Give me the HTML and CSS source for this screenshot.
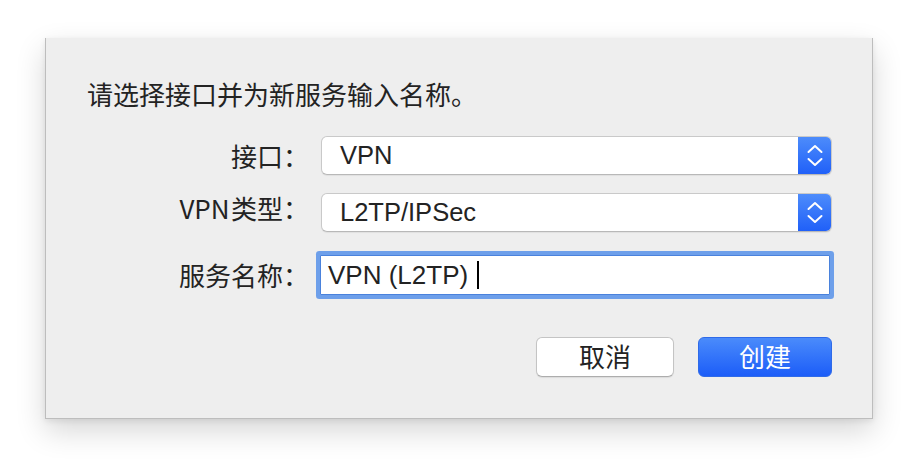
FILE: index.html
```html
<!DOCTYPE html>
<html lang="zh">
<head>
<meta charset="utf-8">
<link rel="stylesheet" href="styles.css">
</head>
<body>
<div class="sheet">
  <p class="title">请选择接口并为新服务输入名称。</p>
  <div class="form">
    <div class="row row-1">
      <span class="label">接口：</span>
      <div class="popup">
        <span class="popup-text">VPN</span>
        <span class="stepper">
          <svg width="34" height="39" viewBox="0 0 34 39"><polyline points="10.5,16 17,10 23.5,16" fill="none" stroke="#fff" stroke-width="2" stroke-linecap="round" stroke-linejoin="round"/><polyline points="10.5,23 17,29 23.5,23" fill="none" stroke="#fff" stroke-width="2" stroke-linecap="round" stroke-linejoin="round"/></svg>
        </span>
      </div>
    </div>
    <div class="row row-2">
      <span class="label">VPN<span class="thin"> </span>类型：</span>
      <div class="popup">
        <span class="popup-text">L2TP/IPSec</span>
        <span class="stepper">
          <svg width="34" height="39" viewBox="0 0 34 39"><polyline points="10.5,16 17,10 23.5,16" fill="none" stroke="#fff" stroke-width="2" stroke-linecap="round" stroke-linejoin="round"/><polyline points="10.5,23 17,29 23.5,23" fill="none" stroke="#fff" stroke-width="2" stroke-linecap="round" stroke-linejoin="round"/></svg>
        </span>
      </div>
    </div>
    <div class="row row-3">
      <span class="label">服务名称：</span>
      <div class="field"><span class="field-text">VPN (L2TP)</span><span class="caret"></span></div>
    </div>
  </div>
  <div class="actions">
    <button class="btn btn-cancel">取消</button>
    <button class="btn btn-default">创建</button>
  </div>
</div>
</body>
</html>
```
FILE: styles.css
```css
html, body {
  margin: 0;
  padding: 0;
  background: #ffffff;
}
body {
  width: 918px;
  height: 472px;
  overflow: hidden;
  font-family: "Liberation Sans", "Noto Sans CJK SC", sans-serif;
  color: #232323;
}
.sheet {
  box-sizing: border-box;
  margin: 38px 0 0 45px;
  width: 828px;
  height: 381px;
  background: #eeeeee;
  border: 1px solid #bdbdbd;
  border-top: none;
  box-shadow: 0 12px 28px rgba(0, 0, 0, 0.16), 0 2px 6px rgba(0, 0, 0, 0.08);
  padding: 0 40px 0 0;
}
.title {
  margin: 0;
  padding: 40px 0 0 41px;
  font-family: "Noto Sans CJK SC", sans-serif;
  font-size: 26px;
  line-height: 32px;
}
.form {
  display: flex;
  flex-direction: column;
  margin-top: 26px;
}
.row {
  display: flex;
  align-items: center;
}
.row-2 { margin-top: 18px; }
.row-3 { margin-top: 23px; }
.label {
  width: 263px;
  text-align: right;
  font-family: "Noto Sans CJK SC", sans-serif;
  font-size: 26px;
  line-height: 30px;
  margin-right: 12px;
  white-space: nowrap;
}
.thin {
  font-size: 6px;
}
.popup {
  box-sizing: border-box;
  width: 511px;
  height: 39px;
  display: flex;
  align-items: center;
  justify-content: space-between;
  background: #ffffff;
  border: 1px solid #c9c9c9;
  border-bottom-color: #b8b8b8;
  border-radius: 6px;
  box-shadow: 0 1px 1px rgba(0, 0, 0, 0.06);
  overflow: hidden;
}
.popup-text {
  font-size: 25.5px;
  padding-left: 18px;
}
.stepper {
  width: 34px;
  height: 39px;
  display: flex;
  background: linear-gradient(#4e8dfb, #1f5ff8);
  margin-right: -1px;
}
.field {
  box-sizing: border-box;
  width: 510px;
  height: 40px;
  margin-left: -1px;
  display: flex;
  align-items: center;
  background: #ffffff;
  border: 1px solid #4a82dc;
  border-radius: 1px;
  box-shadow: 0 0 0 4px #6d9fea;
  padding-left: 7px;
}
.field-text {
  font-size: 26px;
}
.caret {
  width: 2px;
  height: 28px;
  background: #000;
  margin-left: 9px;
}
.actions {
  display: flex;
  justify-content: flex-end;
  gap: 24px;
  margin-top: 42px;
}
.btn {
  box-sizing: border-box;
  height: 40px;
  font-family: "Noto Sans CJK SC", sans-serif;
  font-size: 26px;
  line-height: 1;
  border-radius: 6px;
  padding: 0 0 3px;
}
.btn-cancel {
  width: 138px;
  background: #ffffff;
  color: #232323;
  border: 1px solid #c4c4c4;
  border-bottom-color: #adadad;
  box-shadow: 0 1px 1px rgba(0, 0, 0, 0.08);
}
.btn-default {
  width: 134px;
  color: #ffffff;
  background: linear-gradient(#4a8bfb, #1c5df8);
  border: 1px solid #2f6ae8;
}
```
